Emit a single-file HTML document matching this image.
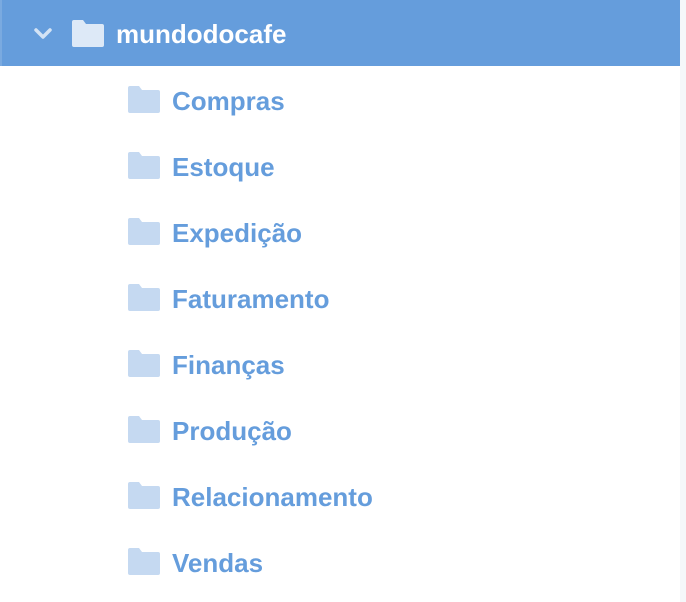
<!DOCTYPE html>
<html><head><meta charset="utf-8"><style>
html,body{margin:0;padding:0;width:686px;height:602px;overflow:hidden;background:#fff;font-family:"Liberation Sans",sans-serif;}
.side{position:absolute;left:680px;top:0;width:6px;height:602px;background:#f5f7fa;}
.hdr{position:absolute;left:0;top:0;width:680px;height:66px;background:#659ddc;}
.hdr .edge{position:absolute;left:0;top:0;width:2px;height:66px;background:#7aaae0;}
.t{position:absolute;white-space:nowrap;font-weight:bold;font-size:26px;}
</style></head><body>
<div class="side"></div>
<div class="hdr"><div class="edge"></div>
<svg style="position:absolute;left:33px;top:28px" width="20" height="12" viewBox="0 0 20 12"><path d="M3 2 L10 9 L17 2" stroke="#d3e3f5" stroke-width="3.5" fill="none" stroke-linecap="round" stroke-linejoin="round"/></svg>
<svg style="position:absolute;left:72px;top:20px" width="32" height="27" viewBox="0 0 32 27"><path d="M2 0 H11 L14 4 H30 A2 2 0 0 1 32 6 V25 A2 2 0 0 1 30 27 H2 A2 2 0 0 1 0 25 V2 A2 2 0 0 1 2 0Z" fill="#dde9f7"/></svg>
<div class="t" style="left:116px;top:19px;color:#fff;">mundodocafe</div>
</div>
<div id="list"></div>
<script>
var n=["Compras","Estoque","Expedição","Faturamento","Finanças","Produção","Relacionamento","Vendas"];
var h="";
n.forEach(function(s,i){var c=100+66*i;
h+='<svg style="position:absolute;left:128px;top:'+(c-14)+'px" width="32" height="27" viewBox="0 0 32 27"><path d="M2 0 H11 L14 4 H30 A2 2 0 0 1 32 6 V25 A2 2 0 0 1 30 27 H2 A2 2 0 0 1 0 25 V2 A2 2 0 0 1 2 0Z" fill="#c5d9f1"/></svg>';
h+='<div class="t" style="left:172px;top:'+(c-14)+'px;color:#659ddc;">'+s+'</div>';});
document.getElementById("list").innerHTML=h;
</script>
</body></html>
